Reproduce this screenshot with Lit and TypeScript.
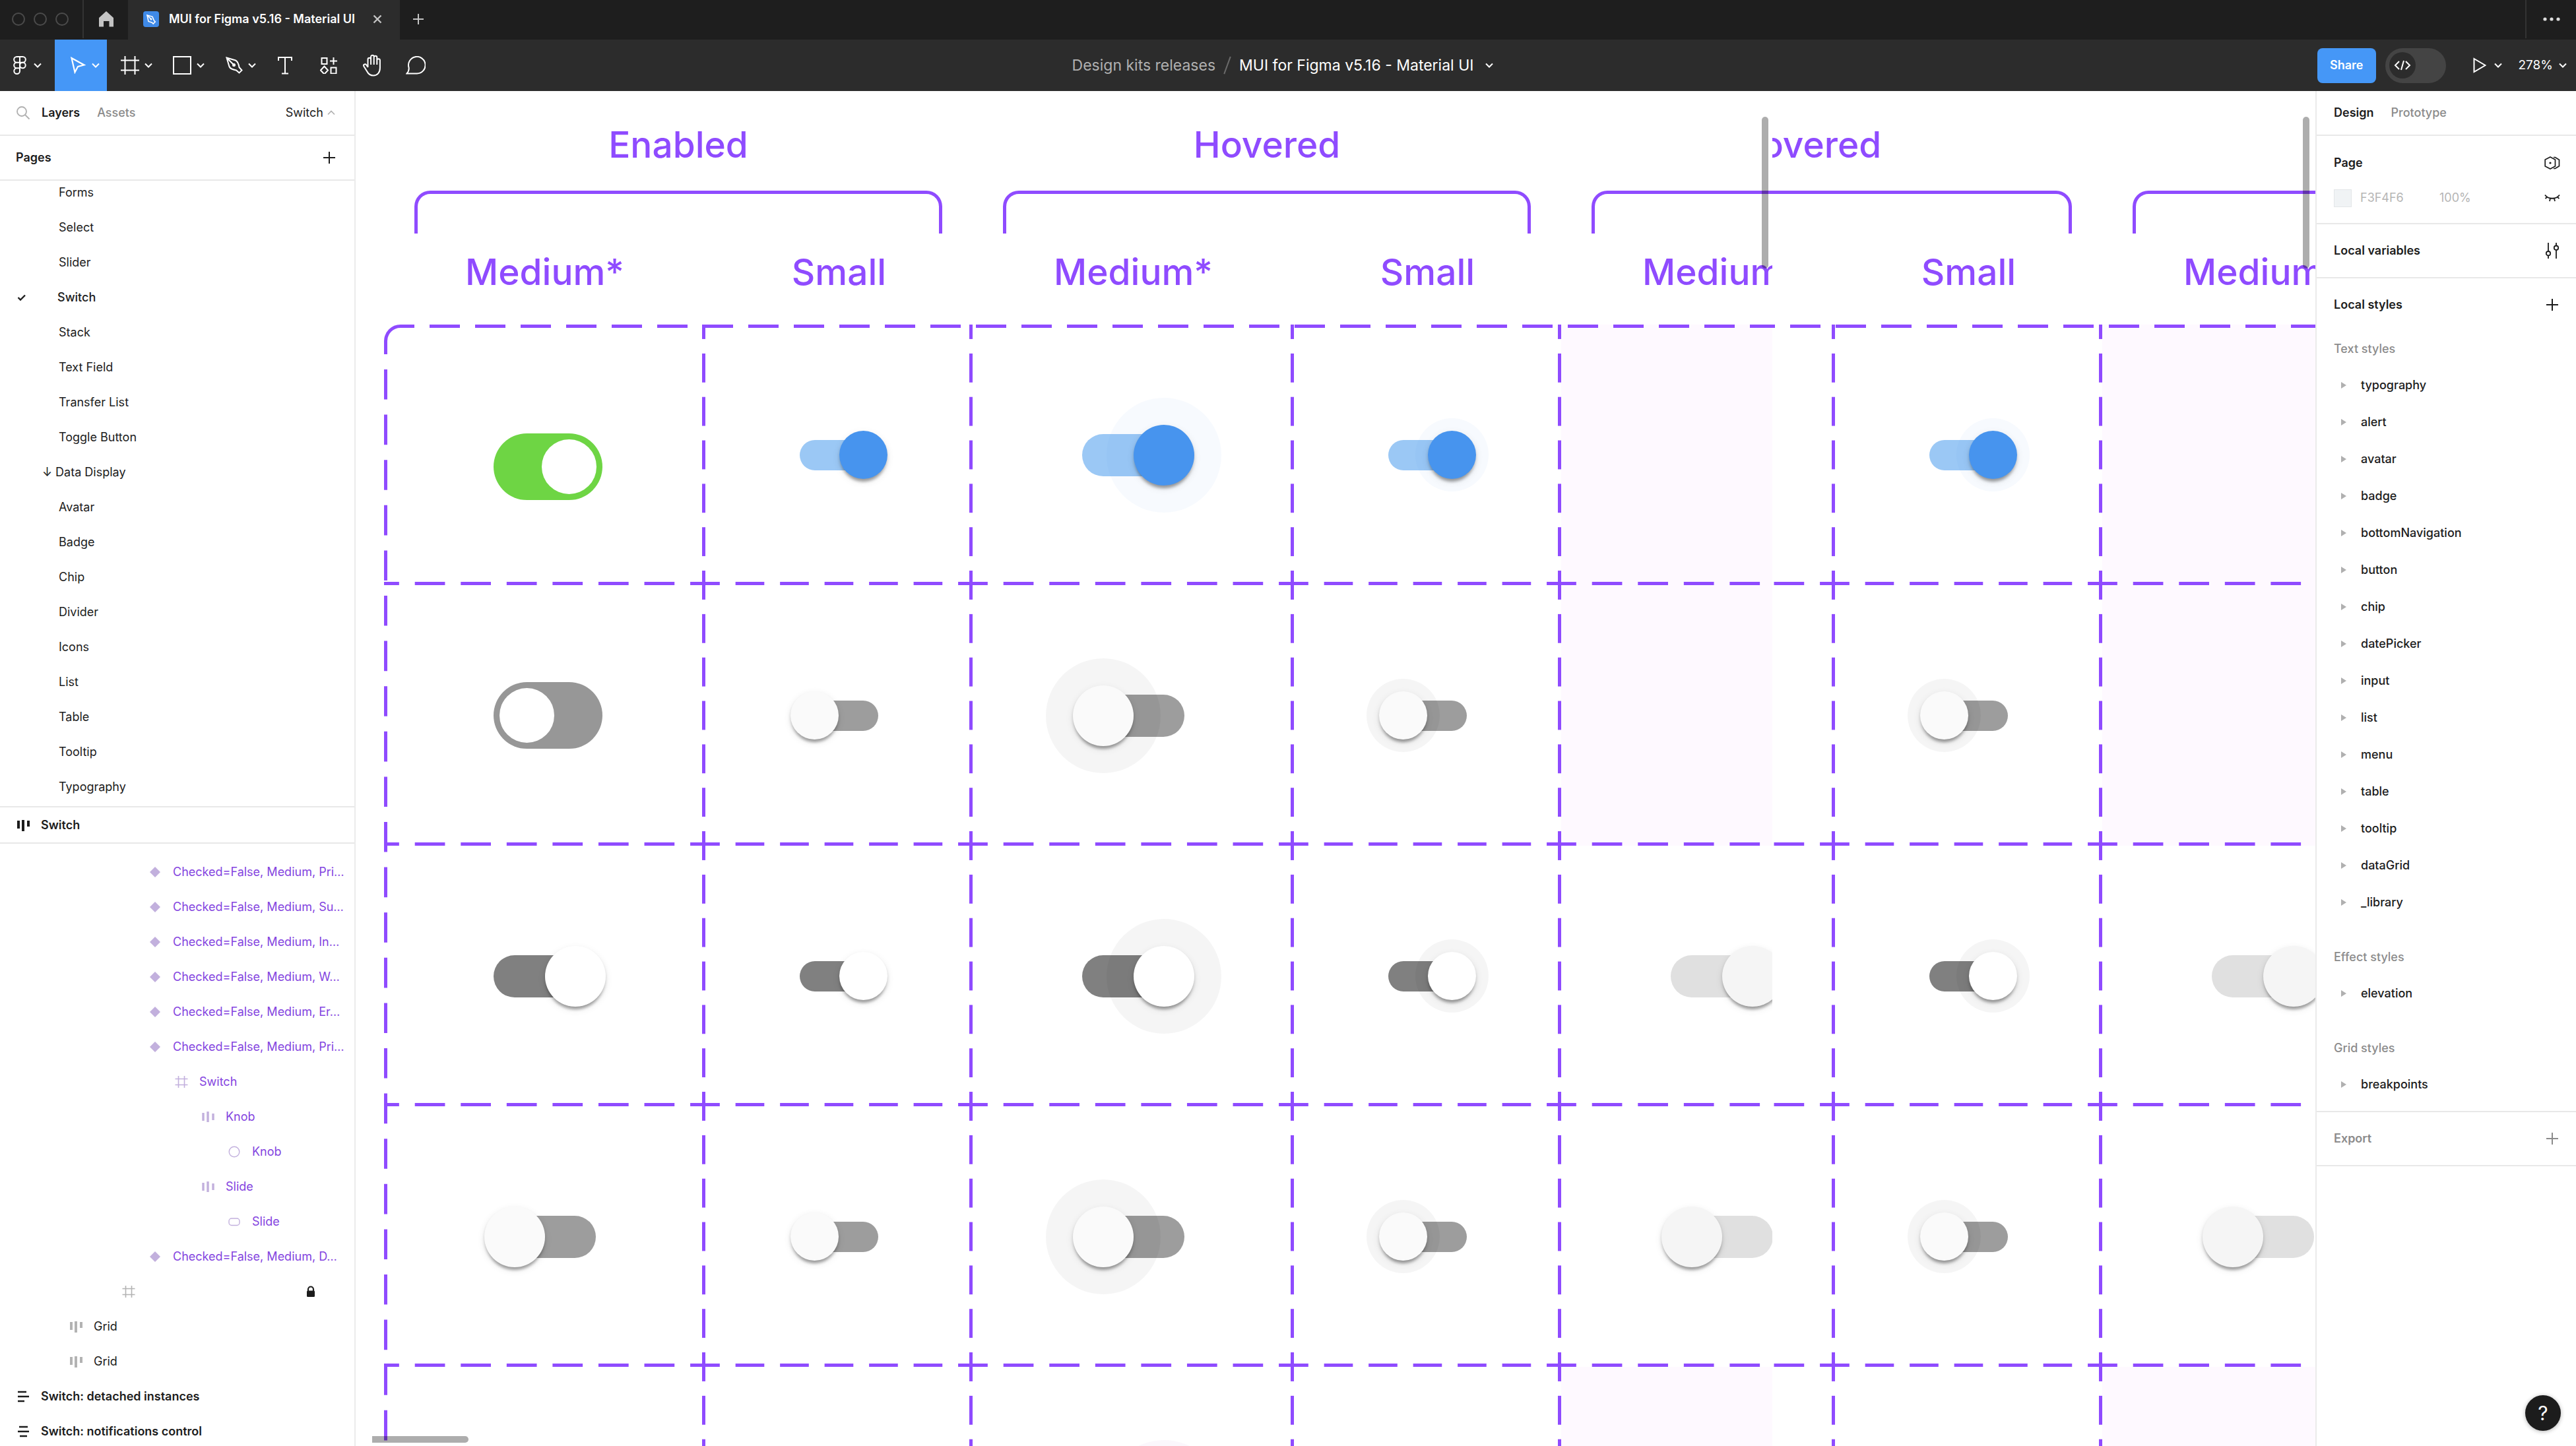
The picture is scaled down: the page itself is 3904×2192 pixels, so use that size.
import { LitElement, html, css, svg, nothing } from "lit";
import { customElement, property } from "lit/decorators.js";
import { classMap } from "lit/directives/class-map.js";
import { styleMap } from "lit/directives/style-map.js";

/* ---------- icons ---------- */

const line = (w: number, h: number, body: unknown, stroke = 2) => html`<svg
  width=${w} height=${h} viewBox="0 0 ${w} ${h}" fill="none" stroke="currentColor"
  stroke-width=${stroke} aria-hidden="true">${body}</svg>`;

const icons = {
  home: () => line(22, 24, svg`<path d="M0 10 11 0l11 10v13.500h-6.500v-8.500h-8.500v8.500H0z" fill="currentColor" stroke="none"/>`),
  file: () => html`<svg width="24" height="24" viewBox="0 0 24 24" fill="none" aria-hidden="true">
    <rect width="24" height="24" rx="4" fill="#3f8ae8"/>
    <g stroke="#fff" stroke-width="1.600"><path d="M6 6l8 2.300 2.500 6 1.700 1.700-3 3-1.800-1.800-5.400-1.700z"/><path d="M6 6l5.500 5.500"/></g>
    <circle cx="12" cy="12" r="1.500" fill="#fff"/></svg>`,
  close: () => line(14, 14, svg`<path d="M1.500 1.500l11 11M12.500 1.500l-11 11"/>`, 2.4),
  plusTab: () => line(16, 16, svg`<path d="M8 0v16M0 8h16"/>`),
  plus: () => line(18, 18, svg`<path d="M9 0v18M0 9h18"/>`, 2),
  dots: () => line(26, 6, svg`<g fill="currentColor" stroke="none"><circle cx="3" cy="3" r="2.600"/><circle cx="13" cy="3" r="2.600"/><circle cx="23" cy="3" r="2.600"/></g>`),
  chevron: () => line(12, 8, svg`<path d="M1 1.500l5 5 5-5"/>`),
  chevronUp: () => line(12, 8, svg`<path d="M1 6.500l5-5 5 5"/>`, 1.6),
  figma: () => line(26, 28, svg`<path d="M13 1H8.500a4.300 4.300 0 0 0 0 8.700H13zM13 1h4.500a4.300 4.300 0 0 1 0 8.700H13zM13 9.700H8.500a4.300 4.300 0 0 0 0 8.600H13zM13 18.300H8.500a4.350 4.350 0 1 0 4.500 4.400z"/><circle cx="17.400" cy="14" r="4.300"/>`),
  move: () => line(26, 26, svg`<path d="M3.500 2l19 10.500-9.500 2.500-4.500 8.500z"/>`, 2.2),
  frame: () => line(28, 28, svg`<path d="M6.500 0v28M21.500 0v28M0 6.500h28M0 21.500h28"/>`),
  rect: () => line(28, 28, svg`<path d="M1 1h26v26H1z"/>`),
  pen: () => line(26, 26, svg`<path d="M1.500 1.500L15 5.500c2.800 1.200 4.600 5.500 5.500 10.500l4 4.500-4 4-4.500-4c-5-.9-9.300-2.700-10.500-5.500zM1.500 1.500l10 10"/><circle cx="12.500" cy="12.500" r="2.500" fill="currentColor" stroke="none"/>`),
  text: () => line(24, 28, svg`<path d="M2 7V2h20v5M12 2v24.500M7 26.500h10"/>`),
  parts: () => line(26, 26, svg`<path d="M2.500 2h8v9h-8zM15 6.500h11M20.500 1v11M6.500 14.500l5.500 6-5.500 6-5.500-6zM16.500 16.500h8v9h-8z"/>`),
  hand: () => line(30, 34, svg`<path d="M8.500 20V8a2.300 2.300 0 0 1 4.600 0v8M13.100 16V4a2.300 2.300 0 0 1 4.600 0v12M17.700 16V5a2.300 2.300 0 0 1 4.600 0v11M22.300 9.500a2.300 2.300 0 0 1 4.600 0V21c0 7-4 11.500-10 11.500-4.500 0-7.500-2-9.500-6l-5-8c-1.400-2.700 1.800-4.500 3.800-2.200L8.500 20"/>`),
  comment: () => line(30, 28, svg`<path d="M1.500 26.500c2.400-2.600 3.600-5 3.100-9A12.800 12.800 0 1 1 17 26.500z"/>`),
  code: () => line(26, 16, svg`<path d="M8 2L2 8l6 6M18 2l6 6-6 6M15 1l-4 14"/>`),
  play: () => line(20, 24, svg`<path d="M1.500 2l17 10-17 10z"/>`),
  search: () => line(22, 22, svg`<circle cx="9" cy="9" r="7"/><path d="M14 14l6.500 6.500"/>`, 1.8),
  check: () => line(14, 10, svg`<path d="M1.500 5l3.500 3.500 7-7"/>`, 2.4),
  columns: () => line(24, 18, svg`<path d="M5 2v12M12 1v17M20 2v9" stroke-width="4"/>`),
  columnsMid: () => line(24, 18, svg`<path d="M5 3v12M12 1v16M20 4v10" stroke-width="3.400"/>`),
  diamond: () => line(24, 18, svg`<path d="M12 1l8 8-8 8-8-8z" fill="currentColor" stroke="none"/>`),
  hash: () => line(24, 18, svg`<path d="M7.500 0v18M16.500 0v18M2.500 4.500h19M2.500 13.500h19"/>`, 1.6),
  circle: () => line(24, 18, svg`<circle cx="12" cy="9" r="7.800"/>`, 1.4),
  pill: () => line(24, 18, svg`<rect x="4" y="4" width="16" height="10.500" rx="4"/>`, 1.4),
  linesLeft: () => line(24, 18, svg`<path d="M4 2h13M4 9h17M4 16h10"/>`, 2.6),
  linesMid: () => line(24, 18, svg`<path d="M6 2h13M4 9h17M7 16h11"/>`, 2.6),
  lock: () => line(14, 18, svg`<path d="M3 8V5.500a4 4 0 0 1 8 0V8"/><rect x="1" y="7.500" width="12" height="9.500" rx="1.500" fill="currentColor" stroke="none"/>`, 2.2),
  arrow: () => line(8, 10, svg`<path d="M0 0l8 5-8 5z" fill="currentColor" stroke="none"/>`),
  library: () => line(24, 20, svg`<path d="M9 1l7.500 4v10L9 19l-7.800-4V5zM14 1.500h2.500l6 3.800v9.400l-6 3.800H14"/><circle cx="9" cy="10" r="1.600" fill="currentColor" stroke="none"/>`, 1.7),
  eyeClosed: () => line(24, 12, svg`<path d="M1 1.500c5 7 17 7 22 0M4.500 4.500L1.500 7M9 6.500L8 11M15 6.500l1 4.500M19.500 4.500l3 2.500"/>`, 1.8),
  sliders: () => line(20, 24, svg`<path d="M4 0v13M4 19.500V24M16 0v4.500M16 11v13"/><circle cx="4" cy="16.200" r="3.200"/><circle cx="16" cy="7.700" r="3.200"/>`, 1.8),
};
type IconName = keyof typeof icons;

/* ---------- data ---------- */

const pages = ["Forms", "Select", "Slider", "Switch", "Stack", "Text Field", "Transfer List", "Toggle Button",
  "↓ Data Display", "Avatar", "Badge", "Chip", "Divider", "Icons", "List", "Table", "Tooltip", "Typography"];

type Layer = { name?: string; icon: IconName; level: number; tone: "main" | "part" | "plain"; locked?: boolean };
const variant = (tail: string): Layer => ({ name: `Checked=False, Medium, ${tail}…`, icon: "diamond", level: 5, tone: "part" });
const layers: Layer[] = [
  variant("Pri"), variant("Su"), variant("In"), variant("W"), variant("Er"), variant("Pri"),
  { name: "Switch", icon: "hash", level: 6, tone: "part" },
  { name: "Knob", icon: "columnsMid", level: 7, tone: "part" },
  { name: "Knob", icon: "circle", level: 8, tone: "part" },
  { name: "Slide", icon: "columnsMid", level: 7, tone: "part" },
  { name: "Slide", icon: "pill", level: 8, tone: "part" },
  variant("D"),
  { icon: "hash", level: 4, tone: "plain", locked: true },
  { name: "Grid", icon: "columns", level: 2, tone: "plain" },
  { name: "Grid", icon: "columns", level: 2, tone: "plain" },
  { name: "Switch: detached instances", icon: "linesLeft", level: 0, tone: "main" },
  { name: "Switch: notifications control", icon: "linesMid", level: 0, tone: "main" },
];

const textStyles = ["typography", "alert", "avatar", "badge", "bottomNavigation", "button", "chip", "datePicker",
  "input", "list", "menu", "table", "tooltip", "dataGrid", "_library"];

/* Each group heading: title, then the labels of its two columns. */
type Heading = [title: string, medium: string, small: string];
const leftHeadings: Heading[] = [["Enabled", "Medium*", "Small"], ["Hovered", "Medium*", "Small"], ["", "Medium*", ""]];
const rightHeadings: Heading[] = [["", "", ""], ["Hovered", "", "Small"], ["", "Medium*", ""]];

type Look = "ios" | "primary" | "default" | "secondary" | "disabled";
type Cell = { look: Look; on: boolean; small?: boolean; hover?: boolean; low?: boolean } | "blank" | null;
const pair = (look: Look, on: boolean, hover = false): Cell[] => [{ look, on, hover }, { look, on, hover, small: true }];
const rows: Cell[][] = [
  [{ look: "ios", on: true, low: true }, pair("primary", true)[1], ...pair("primary", true, true), "blank", null],
  [{ look: "ios", on: false }, pair("default", false)[1], ...pair("default", false, true), "blank", null],
  [...pair("default", true), ...pair("default", true, true), ...pair("disabled", true)],
  [...pair("default", false), ...pair("default", false, true), ...pair("disabled", false)],
  [...pair("secondary", true), ...pair("secondary", true, true), "blank", null],
];

/* ---------- switch ---------- */

@customElement("demo-switch")
class DemoSwitch extends LitElement {
  @property() look: Look = "default";
  @property({ type: Boolean }) on = false;
  @property({ type: Boolean }) small = false;
  @property({ type: Boolean }) hover = false;

  static styles = css`
    :host { display: block; }
    .switch {
      --w: 155px; --h: 64px; --knob: 92px; --halo: 174px; --shift: 46px;
      --track: #9d9d9d; --fill: #fafafa; --tint: rgba(0, 0, 0, 0.04);
      appearance: none; display: block; position: relative; margin: 0;
      width: var(--w); height: var(--h); border-radius: 60px; background: var(--track);
    }
    .small { --w: 119px; --h: 46px; --knob: 73px; --halo: 111px; --shift: 37px; }
    .switch::before, .switch::after {
      content: ""; position: absolute; left: 50%; top: 50%; border-radius: 50%;
      width: var(--size); height: var(--size);
      margin: calc(var(--size) / -2) 0 0 calc(var(--size) / -2 - var(--shift));
    }
    .switch:checked::before, .switch:checked::after { margin-left: calc(var(--size) / -2 + var(--shift)); }
    .switch::before { --size: var(--halo); background: none; }
    .hover::before { background: var(--tint); }
    .switch::after {
      --size: var(--knob); background: var(--fill);
      box-shadow: 0 8px 4px -4px rgba(0, 0, 0, 0.22), 0 4px 4px rgba(0, 0, 0, 0.16), 0 4px 12px rgba(0, 0, 0, 0.1);
    }
    .default:checked { --track: #808080; --fill: #fff; }
    .primary { --track: #9bc8f5; --fill: #4794ee; --tint: rgba(71, 148, 238, 0.045); }
    .secondary { --track: #ce93d8; --fill: #9c27b0; --tint: rgba(156, 39, 176, 0.04); }
    .disabled { --track: #e0e0e0; --fill: #f5f5f5; }
    .ios { --track: #979797; --fill: #fff; --knob: 83px; --h: 101px; --shift: 32px; width: 165px; margin-right: -10px; }
    .ios:checked { --track: #6ed544; }
    .ios::after { box-shadow: none; }
  `;

  render() {
    return html`<input
      type="checkbox" role="switch" aria-label="Switch"
      class=${classMap({ switch: true, [this.look]: true, small: this.small, hover: this.hover })}
      .checked=${this.on} ?disabled=${this.look === "disabled"} />`;
  }
}

/* ---------- board of variants ---------- */

@customElement("variant-board")
class VariantBoard extends LitElement {
  @property({ attribute: false }) headings: Heading[] = leftHeadings;

  static styles = css`
    :host { display: block; --ink: #8f4bff; }
    .board { display: flex; flex-direction: column; width: max-content; padding: 48px 0 0 43px; color: var(--ink);
      font: 500 55px/66px Inter, "Liberation Sans", sans-serif; }
    .groups { display: flex; }
    .group { width: 892px; text-align: center; }
    .title { height: 66px; }
    .bracket { height: 60px; margin: 37px 46px 0; border: 5px solid var(--ink); border-bottom: 0; border-radius: 24px 24px 0 0; }
    .sizes { display: grid; grid-template-columns: 487fr 405fr; height: 66px; margin: 25px 0 47px; }
    .grid { position: relative; }
    .outline { position: absolute; inset: 0; width: 100%; height: 100%; overflow: visible; }
    .row { display: grid; grid-template-columns: repeat(3, 487px 405px); }
    .cell {
      display: grid; place-items: center; box-sizing: border-box; height: 395px; padding: 5px;
      background:
        linear-gradient(90deg, var(--ink) 33%, transparent 33% 67%, var(--ink) 67%) left bottom / calc(100% / var(--n)) 5px repeat-x,
        linear-gradient(var(--ink) 33%, transparent 33% 67%, var(--ink) 67%) right top / 5px calc(100% / 6) repeat-y,
        var(--paper, transparent);
      --n: 7;
    }
    .cell:nth-child(even) { --n: 6; }
    .blank { --paper: #fef9ff; }
    .low { padding-top: 41px; }
  `;

  render() {
    return html`<div class="board">
      <div class="groups">
        ${this.headings.map(([title, medium, small]) => html`<div class="group">
          <div class="title">${title}</div>
          <div class="bracket"></div>
          <div class="sizes"><span>${medium}</span><span>${small}</span></div>
        </div>`)}
      </div>
      <div class="grid">
        ${rows.map((row) => html`<div class="row">
          ${row.map((c) => html`<div class=${classMap({
            cell: true, blank: c === "blank", low: !!c && c !== "blank" && !!c.low,
          })}>
            ${c && c !== "blank"
              ? html`<demo-switch .look=${c.look} .on=${c.on} .small=${!!c.small} .hover=${!!c.hover}></demo-switch>`
              : nothing}
          </div>`)}
        </div>`)}
        <svg class="outline" fill="none" stroke="#8f4bff" stroke-width="5" aria-hidden="true">
          <path d="M2.500 45V25A22.500 22.500 0 0 1 25 2.500H46" />
          <line x1="69" y1="2.500" x2="100%" y2="2.500" stroke-dasharray="46 23" />
          <line x1="2.500" y1="68" x2="2.500" y2="100%" stroke-dasharray="45.600 23" />
        </svg>
      </div>
    </div>`;
  }
}

/* ---------- application ---------- */

@customElement("app-root")
class AppRoot extends LitElement {
  static styles = css`
    :host { display: block; font: 400 18px/24px Inter, "Liberation Sans", sans-serif; color: #1c1c1c; background: #fff; }
    * { box-sizing: border-box; }
    button, a { font: inherit; color: inherit; background: none; border: 0; padding: 0; margin: 0; text-align: left; text-decoration: none; white-space: nowrap; }
    svg { display: block; flex: none; }
    h2, h3, ul, p { margin: 0; padding: 0; font: inherit; list-style: none; }
    .app { display: flex; flex-direction: column; height: 100vh; overflow: hidden; }

    .tabs { flex: none; display: flex; height: 60px; background: #1e1e1e; color: #c4c4c4; }
    .tabs > * { display: flex; align-items: center; height: 58px; }
    .lights { width: 127px; padding-left: 18px; gap: 13px; border-right: 2px solid #333; }
    .light { width: 20px; height: 20px; border: 2px solid #4b4b4b; border-radius: 50%; }
    .home { width: 67px; justify-content: center; }
    .tabs > .tab { width: 412px; height: 60px; background: #2c2c2c; color: #fff; font-weight: 600; white-space: nowrap; padding: 0 27px 2px 23px; gap: 15px; }
    .tab .x { margin-left: auto; color: #c4c4c4; }
    .new { width: 56px; justify-content: center; }
    .more { width: 77px; margin-left: auto; justify-content: center; border-left: 2px solid #333; color: #ddd; }

    .bar { flex: none; display: grid; grid-template-columns: 1fr auto 1fr; height: 78px; background: #2c2c2c; color: #fff; }
    .tools, .actions, .crumbs { display: flex; align-items: center; }
    .tool { display: flex; align-items: center; justify-content: center; height: 78px; width: 66px; }
    .tool.menu { width: 79px; gap: 8px; padding-left: 11px; }
    .tool.brand { width: 83px; padding: 0 4px 0 0; }
    .tool.active { background: #4597f7; }
    .crumbs { font-size: 23px; gap: 12px; padding-right: 16px; }
    .folder { color: #b0b0b0; }
    .slash { width: 2px; height: 28px; background: #6a6a6a; transform: rotate(20deg); margin: 0 5px; }
    .crumb { display: flex; align-items: center; gap: 18px; }
    .actions { justify-content: flex-end; padding-right: 14px; }
    .share { height: 53px; padding: 0 19px; border-radius: 8px; background: #4597f7; font-weight: 600; }
    .dev { display: flex; align-items: center; width: 92px; height: 53px; border-radius: 27px; background: #444; padding-left: 6px; margin: 0 41px 0 14px; }
    .dot { display: grid; place-items: center; width: 40px; height: 40px; border-radius: 50%; background: #2c2c2c; }
    .pick { display: flex; align-items: center; gap: 12px; }
    .zoom { gap: 9px; margin-left: 25px; font-size: 19px; }

    .body { flex: 1; min-height: 0; display: flex; }
    .side { flex: none; display: flex; flex-direction: column; width: 539px; border-right: 2px solid #ebebeb; }
    .head { flex: none; display: flex; align-items: center; height: 68px; border-bottom: 2px solid #e8e8e8; padding: 0 29px 0 24px; }
    .bold { font-weight: 600; }
    .muted { color: #8b8b8b; font-weight: 500; }
    .gap-icon { margin-left: 17px; }
    .gap-tab { margin-left: 26px; }
    .push { margin-left: auto; }
    .faint { color: #b0b0b0; }
    .up { display: flex; align-items: center; gap: 6px; }
    .pages { flex: none; overflow: hidden; padding-bottom: 3px; border-bottom: 2px solid #e8e8e8; }
    .pages li:first-child { margin-top: -9px; }
    .page { display: flex; align-items: center; width: 100%; height: 53px; padding-left: 89px; }
    .page.section { padding-left: 64px; }
    .page.current { padding-left: 26px; font-weight: 500; gap: 47px; }
    .current-frame { flex: none; display: flex; align-items: center; gap: 15px; height: 55px; padding-left: 23px; font-weight: 600; border-bottom: 2px solid #e8e8e8; }
    .layers { flex: 1; min-height: 0; overflow: hidden; padding-top: 16px; }
    .layer { display: flex; align-items: center; gap: 15px; width: 100%; height: 53px; }
    .layer .glyph { color: #b3b3b3; }
    .part { color: #8444e0; }
    .part .glyph { color: #c2b0dd; }
    .main { font-weight: 600; }
    .layer.main .glyph { color: #1c1c1c; }
    .lock { margin: 0 59px 0 auto; }

    .canvas { flex: 1; min-width: 0; display: flex; }
    .pane { position: relative; min-width: 0; overflow: hidden; flex: 2147 0 0; }
    .pane.second { flex-grow: 823; }
    .scrolled { margin-left: -1327px; }
    .thumb { position: absolute; background: rgba(0, 0, 0, 0.32); border-radius: 5px; }
    .down { top: 39px; right: 6px; width: 10px; height: 230px; }
    .second .down { right: 9px; }
    .across { left: 25px; bottom: 5px; width: 146px; height: 10px; border-radius: 0 5px 5px 0; }

    .props { flex: none; width: 395px; border-left: 2px solid #ebebeb; position: relative; }
    .props .head { padding: 0 0 0 26px; }
    .block { border-bottom: 2px solid #e8e8e8; }
    .prop { display: flex; align-items: center; justify-content: space-between; height: 80px; padding: 0 24px 0 26px; font-weight: 600; }
    .end { display: grid; place-items: center; width: 24px; height: 24px; }
    .tight { height: 82px; }
    .fill { display: flex; align-items: center; height: 24px; margin-bottom: 26px; padding: 0 24px 0 26px; color: #b5b5b5; }
    .fill .end { color: #1c1c1c; }
    .swatch { width: 27px; height: 27px; background: #f0f3f5; border: 1px solid #e3e6e8; margin-right: 13px; }
    .hex { width: 120px; }
    .group { font-weight: 500; color: #8b8b8b; height: 54px; line-height: 54px; padding-left: 26px; }
    .style + .group { margin-top: 28px; }
    .style { display: flex; align-items: center; gap: 22px; width: 100%; height: 56px; padding-left: 37px; font-weight: 500; }
    .style svg { color: #b0b0b0; }
    .last { padding-bottom: 12px; }
    .dim { color: #8b8b8b; }
    .help { position: absolute; right: 23px; bottom: 23px; width: 54px; height: 54px; border-radius: 50%; background: #1c1c1c; color: #fff; font-size: 30px; text-align: center; box-shadow: 0 1px 6px rgba(0, 0, 0, 0.3); }
  `;

  private tool(icon: IconName, label: string, extra = "") {
    return html`<button class="tool ${extra}" aria-label=${label}>
      ${icons[icon]()}${extra.includes("menu") ? icons.chevron() : nothing}
    </button>`;
  }

  private page(name: string) {
    const current = name === "Switch";
    return html`<li><button class=${classMap({ page: true, current, section: name.startsWith("↓") })}>
      ${current ? icons.check() : nothing}${name}
    </button></li>`;
  }

  private layer(l: Layer) {
    return html`<li><button class="layer ${l.tone}" aria-label=${l.name ?? "Frame"}
      style=${styleMap({ paddingLeft: `${23 + l.level * 40}px` })}>
      <span class="glyph">${icons[l.icon]()}</span>${l.name ?? nothing}
      ${l.locked ? html`<span class="lock">${icons.lock()}</span>` : nothing}
    </button></li>`;
  }

  private styleRow(name: string) {
    return html`<button class="style">${icons.arrow()}${name}</button>`;
  }

  render() {
    return html`<div class="app">
      <header class="tabs">
        <div class="lights"><i class="light"></i><i class="light"></i><i class="light"></i></div>
        <button class="home" aria-label="Home">${icons.home()}</button>
        <div class="tab">${icons.file()}<span>MUI for Figma v5.16 - Material UI</span><button class="x" aria-label="Close tab">${icons.close()}</button></div>
        <button class="new" aria-label="New tab">${icons.plusTab()}</button>
        <button class="more" aria-label="More">${icons.dots()}</button>
      </header>

      <div class="bar">
        <div class="tools">
          ${this.tool("figma", "Main menu", "menu brand")}
          ${this.tool("move", "Move", "menu active")}
          ${this.tool("frame", "Frame", "menu")}
          ${this.tool("rect", "Rectangle", "menu")}
          ${this.tool("pen", "Pen", "menu")}
          ${this.tool("text", "Text")}
          ${this.tool("parts", "Resources")}
          ${this.tool("hand", "Hand tool")}
          ${this.tool("comment", "Comment")}
        </div>
        <div class="crumbs">
          <a class="folder" href="#">Design kits releases</a><i class="slash"></i>
          <button class="crumb">MUI for Figma v5.16 - Material UI ${icons.chevron()}</button>
        </div>
        <div class="actions">
          <button class="share">Share</button>
          <button class="dev" aria-label="Dev mode"><span class="dot">${icons.code()}</span></button>
          <button class="pick" aria-label="Present">${icons.play()}${icons.chevron()}</button>
          <button class="pick zoom">278%${icons.chevron()}</button>
        </div>
      </div>

      <div class="body">
        <aside class="side">
          <div class="head">
            <span class="faint">${icons.search()}</span>
            <button class="bold gap-icon">Layers</button>
            <button class="muted gap-tab">Assets</button>
            <button class="up push">Switch <span class="faint">${icons.chevronUp()}</span></button>
          </div>
          <div class="head"><h2 class="bold">Pages</h2><button class="push" aria-label="Add page">${icons.plus()}</button></div>
          <ul class="pages">${pages.map((p) => this.page(p))}</ul>
          <div class="current-frame">${icons.columns()}Switch</div>
          <ul class="layers">${layers.map((l) => this.layer(l))}</ul>
        </aside>

        <main class="canvas">
          <div class="pane">
            <variant-board .headings=${leftHeadings}></variant-board>
            <i class="thumb down"></i><i class="thumb across"></i>
          </div>
          <div class="pane second">
            <variant-board class="scrolled" .headings=${rightHeadings}></variant-board>
            <i class="thumb down"></i>
          </div>
        </main>

        <aside class="props">
          <div class="head"><button class="bold">Design</button><button class="muted gap-tab">Prototype</button></div>
          <section class="block">
            <div class="prop tight"><h2>Page</h2><button class="end" aria-label="Libraries">${icons.library()}</button></div>
            <div class="fill"><i class="swatch"></i><span class="hex">F3F4F6</span><span>100%</span><button class="end push" aria-label="Show fill">${icons.eyeClosed()}</button></div>
          </section>
          <section class="block">
            <div class="prop"><h2>Local variables</h2><button class="end" aria-label="Open variables">${icons.sliders()}</button></div>
          </section>
          <section class="block last">
            <div class="prop"><h2>Local styles</h2><button class="end" aria-label="Add style">${icons.plus()}</button></div>
            <h3 class="group">Text styles</h3>
            ${textStyles.map((s) => this.styleRow(s))}
            <h3 class="group">Effect styles</h3>
            ${this.styleRow("elevation")}
            <h3 class="group">Grid styles</h3>
            ${this.styleRow("breakpoints")}
          </section>
          <section class="block">
            <div class="prop dim"><h2>Export</h2><button class="end" aria-label="Add export">${icons.plus()}</button></div>
          </section>
          <button class="help" aria-label="Help">?</button>
        </aside>
      </div>
    </div>`;
  }
}
